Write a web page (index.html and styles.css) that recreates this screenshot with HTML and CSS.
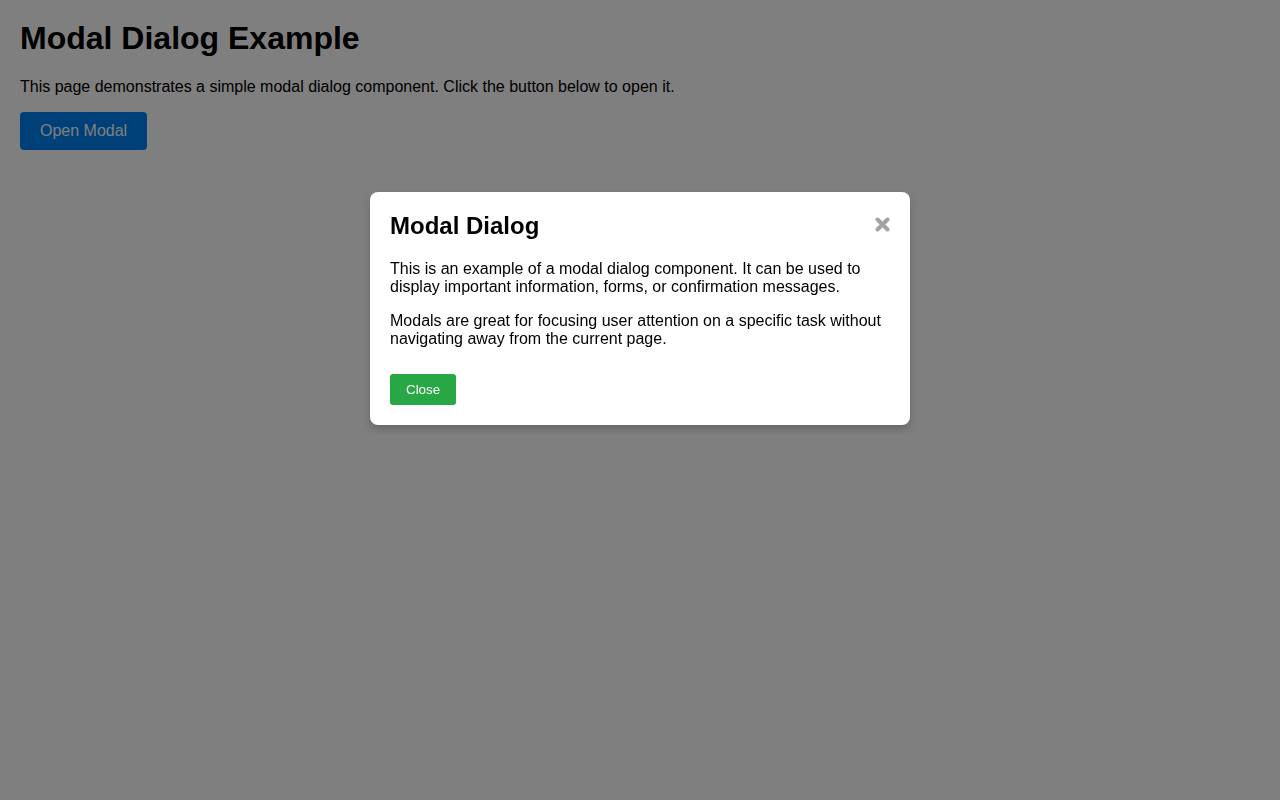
FILE: index.html
```html
<!DOCTYPE html>
<html>
<head>
  <title>Modal Dialog Example</title>
  <link rel="stylesheet" href="styles.css">
</head>
<body>
  <h1>Modal Dialog Example</h1>
  <p>This page demonstrates a simple modal dialog component. Click the button below to open it.</p>
  <button id="openModal" class="button">Open Modal</button>

  <div id="modal" class="modal">
    <div class="modal-content">
      <div class="modal-header">
        <h2>Modal Dialog</h2>
        <span class="close" title="Close">
          <svg width="15" height="15" viewBox="0 0 15 15">
            <path d="M2.5 2.5 L12.5 12.5 M12.5 2.5 L2.5 12.5" stroke="currentColor" stroke-width="4" stroke-linecap="round"/>
          </svg>
        </span>
      </div>
      <div class="modal-body">
        <p>This is an example of a modal dialog component. It can be used to display important information, forms, or confirmation messages.</p>
        <p>Modals are great for focusing user attention on a specific task without navigating away from the current page.</p>
      </div>
      <div class="modal-footer">
        <button class="button-close">Close</button>
      </div>
    </div>
  </div>
</body>
</html>
```

FILE: styles.css
```css
body {
  font-family: "Liberation Sans", Arial, sans-serif;
  margin: 0;
  padding: 20px;
  color: #000;
  background: #fff;
}
h1 {
  font-size: 32px;
  margin: 0 0 21px;
}
p {
  font-size: 16px;
  margin: 0 0 16px;
}
.button {
  background-color: #0080f0;
  border: none;
  color: white;
  padding: 10px 20px;
  font-family: inherit;
  font-size: 16px;
  line-height: 18px;
  cursor: pointer;
  border-radius: 4px;
}
.modal {
  position: fixed;
  top: 0;
  left: 0;
  width: 100%;
  height: 100%;
  background-color: rgba(0, 0, 0, 0.5);
  z-index: 10;
}
.modal-content {
  background: #fff;
  width: 500px;
  margin: 192px auto 0;
  padding: 20px;
  border-radius: 8px;
  box-shadow: 0 4px 8px rgba(0, 0, 0, 0.2);
}
.modal-header {
  display: flex;
  justify-content: space-between;
  align-items: flex-start;
  margin-bottom: 20px;
}
.modal-header h2 {
  font-size: 24px;
  margin: 0;
  line-height: 28px;
}
.close {
  color: #a3a3a3;
  cursor: pointer;
  margin-top: 5px;
  width: 15px;
  height: 15px;
}
.close svg {
  display: block;
}
.modal-body p:last-child {
  margin-bottom: 0;
}
.modal-footer {
  margin-top: 26px;
}
.button-close {
  background-color: #28a745;
  color: white;
  border: none;
  padding: 0 16px;
  height: 31px;
  font-family: inherit;
  font-size: 13.33px;
  border-radius: 3px;
  cursor: pointer;
}
```
